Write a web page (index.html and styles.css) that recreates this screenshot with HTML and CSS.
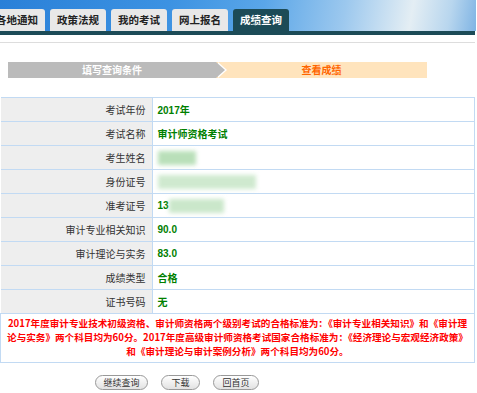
FILE: index.html
```html
<!DOCTYPE html>
<html lang="zh-CN">
<head>
    <meta charset="UTF-8">
    <meta name="viewport" content="width=device-width, initial-scale=1.0">
    <title>成绩查询</title>
    <link rel="stylesheet" href="styles.css">
</head>
<body>
    <div class="header">
        <ul class="tabs">
            <li>各地通知</li>
            <li>政策法规</li>
            <li>我的考试</li>
            <li>网上报名</li>
            <li class="active">成绩查询</li>
        </ul>
    </div>
    <div class="nav-line"></div>
    <div class="sep"></div>

    <div class="steps">
        <div class="step done">填写查询条件</div>
        <div class="step current">查看成绩</div>
    </div>

    <table class="score">
        <tr><th>考试年份</th><td>2017年</td></tr>
        <tr><th>考试名称</th><td>审计师资格考试</td></tr>
        <tr><th>考生姓名</th><td><span class="mask mask-name"></span></td></tr>
        <tr><th>身份证号</th><td><span class="mask mask-id"></span></td></tr>
        <tr><th>准考证号</th><td>13<span class="mask mask-no"></span></td></tr>
        <tr><th>审计专业相关知识</th><td>90.0</td></tr>
        <tr><th>审计理论与实务</th><td>83.0</td></tr>
        <tr><th>成绩类型</th><td>合格</td></tr>
        <tr><th>证书号码</th><td>无</td></tr>
        <tr>
            <td colspan="2" class="notice">
                2017年度审计专业技术初级资格、审计师资格两个级别考试的合格标准为：《审计专业相关知识》和《审计理<br>
                论与实务》两个科目均为60分。2017年度高级审计师资格考试国家合格标准为：《经济理论与宏观经济政策》<br>
                和《审计理论与审计案例分析》两个科目均为60分。
            </td>
        </tr>
    </table>

    <div class="actions">
        <button class="btn btn-wide">继续查询</button>
        <button class="btn">下载</button>
        <button class="btn btn-mid">回首页</button>
    </div>
</body>
</html>
```

FILE: styles.css
```css
body {
    margin: 0;
    padding: 0;
    width: 476px;
    font-family: "Noto Sans CJK SC", "DejaVu Sans", sans-serif;
    font-size: 10px;
    color: #333;
    background: #fff;
}

.header {
    height: 31px;
    overflow: hidden;
    background: linear-gradient(100deg, #2a80d8 0%, #3c92e2 35%, #5aa6e8 55%, #9cc8ee 72%, #e4eef4 86%, #b8d6ee 94%, #7fb4e4 100%);
}

.tabs {
    list-style: none;
    margin: 0 0 0 -11px;
    padding: 9px 0 0 0;
    display: flex;
    gap: 5px;
}

.tabs li {
    width: 56px;
    height: 22px;
    line-height: 22px;
    text-align: center;
    font-weight: bold;
    font-size: 10.5px;
    color: #222;
    background: #e8e8e8;
    border-radius: 3px 3px 0 0;
}

.tabs li.active {
    background: #1c4b57;
    color: #fff;
}

.nav-line {
    height: 4px;
    background: #1c4b57;
    width: 475px;
}

.sep {
    margin-top: 7px;
    height: 1px;
    width: 475px;
    background: #dddddd;
}

.steps {
    display: flex;
    margin: 19px 0 0 8px;
    width: 419px;
    height: 16px;
}

.step {
    line-height: 16px;
    text-align: center;
    font-weight: bold;
    font-size: 10px;
}

.step.done {
    position: relative;
    width: 208px;
    background: #bbbbbb;
    color: #fff;
    z-index: 1;
}

/* arrow tip with white outline */
.step.done::before,
.step.done::after {
    content: "";
    position: absolute;
    top: 0;
    border-style: solid;
    border-color: transparent;
    border-width: 8px 0 8px 9px;
}

.step.done::before {
    right: -11px;
    border-left-color: #fff;
}

.step.done::after {
    right: -9px;
    border-left-color: #bbbbbb;
}

.step.current {
    flex: 1;
    background: #ffe4bd;
    color: #ff6600;
}

.score {
    margin-top: 19px;
    width: 475px;
    border-collapse: collapse;
}

.score th,
.score td {
    height: 23px;
    padding: 0;
    border: 1px solid #c2daf3;
    font-size: 10px;
}

.score th {
    width: 145px;
    padding-right: 6px;
    text-align: right;
    font-weight: normal;
    color: #333;
    background: #eeeeee;
    border-left: none;
}

.score td {
    padding-left: 5px;
    color: #008000;
    font-weight: bold;
    font-family: "Liberation Sans", "Noto Sans CJK SC", sans-serif;
}

.mask {
    display: inline-block;
    height: 14px;
    vertical-align: middle;
    background: #a8d8a8;
    filter: blur(2px);
    opacity: 0.8;
}

.mask-name {
    width: 38px;
}

.mask-id {
    width: 98px;
    opacity: 0.55;
}

.mask-no {
    width: 55px;
    opacity: 0.6;
}

.score td.notice {
    height: auto;
    padding: 2px 2px 4px 2px;
    text-align: center;
    line-height: 14px;
    color: #ff0000;
    font-family: "Noto Sans CJK SC", sans-serif;
    font-size: 9.6px;
    white-space: nowrap;
}

.actions {
    display: flex;
    gap: 13px;
    margin: 12px 0 0 95px;
}

.btn {
    height: 15px;
    width: 39px;
    padding: 0;
    font-family: "Noto Sans CJK SC", sans-serif;
    font-size: 9px;
    line-height: 13px;
    color: #333;
    border: 1px solid #999;
    border-radius: 8px;
    background: linear-gradient(#ffffff, #e2e2e2);
}

.btn-wide {
    width: 53px;
}

.btn-mid {
    width: 46px;
}
```
